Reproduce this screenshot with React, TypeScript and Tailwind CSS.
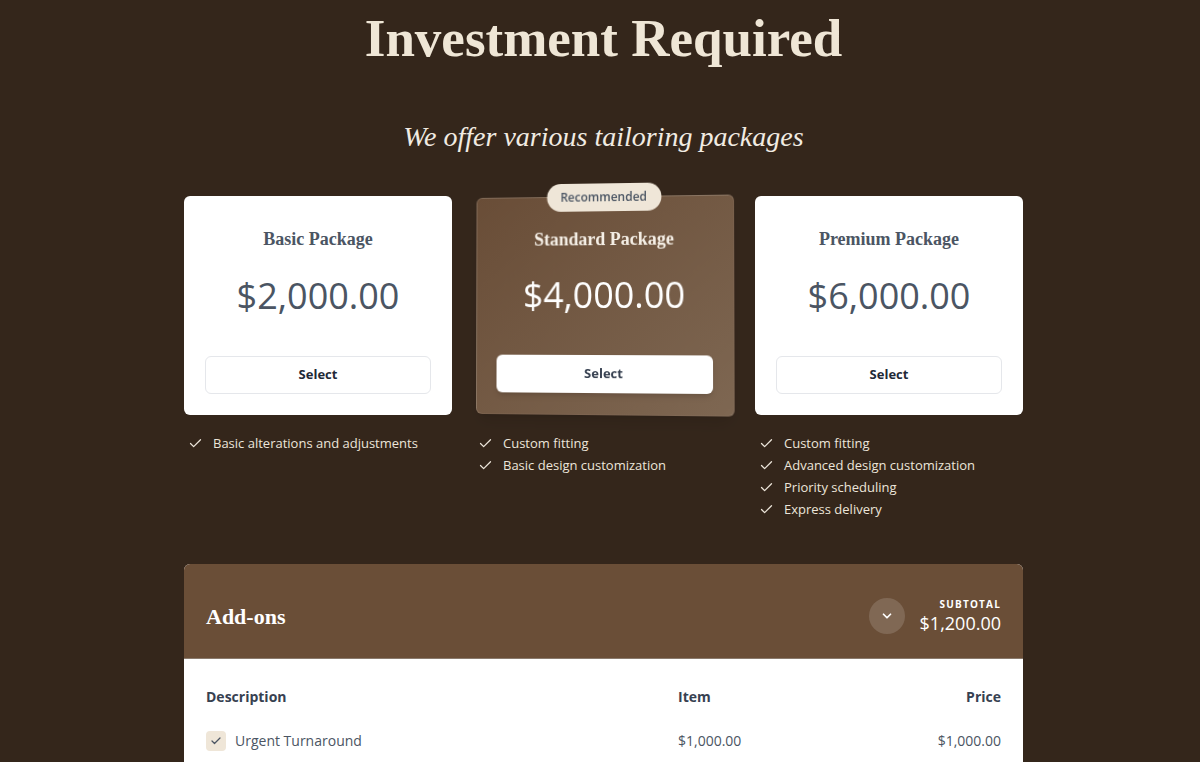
import { Check, ChevronDown } from "lucide-react";

const serif = "font-['Liberation_Serif',serif]";
const sans = "font-['Open_Sans',sans-serif]";

interface Pkg {
  name: string;
  price: string;
  features: string[];
  featured?: boolean;
}

const packages: Pkg[] = [
  { name: "Basic Package", price: "$2,000.00", features: ["Basic alterations and adjustments"] },
  {
    name: "Standard Package",
    price: "$4,000.00",
    features: ["Custom fitting", "Basic design customization"],
    featured: true,
  },
  {
    name: "Premium Package",
    price: "$6,000.00",
    features: ["Custom fitting", "Advanced design customization", "Priority scheduling", "Express delivery"],
  },
];

function PackageCard({ pkg }: { pkg: Pkg }) {
  if (pkg.featured) {
    return (
      <div className="relative rounded-md border border-white/10 bg-gradient-to-br from-[#694d37] to-[#7e6752] px-5 pb-[21px] pt-[28px] text-center shadow-lg [transform:perspective(800px)_rotateX(1deg)_rotateY(-5deg)]">
        <span className={`absolute -top-[14px] left-1/2 -translate-x-1/2 rounded-full bg-[#efe6d8] px-[14px] py-[5px] text-[12px] font-semibold leading-[18px] text-[#4b5563] ${sans}`}>
          Recommended
        </span>
        <h3 className={`text-[18px] font-bold leading-[28px] text-[#f5efe6] ${serif}`}>{pkg.name}</h3>
        <p className={`mt-[22px] text-[36px] leading-[40px] text-white ${sans}`}>{pkg.price}</p>
        <button className={`mt-[40px] h-[38px] w-full rounded-md bg-white text-[13px] font-bold text-[#374151] shadow-md ${sans}`}>
          Select
        </button>
      </div>
    );
  }
  return (
    <div className="rounded-md bg-white px-[21px] pb-[21px] pt-[29px] text-center">
      <h3 className={`text-[18px] font-bold leading-[28px] text-[#4b5563] ${serif}`}>{pkg.name}</h3>
      <p className={`mt-[23px] text-[36px] leading-[40px] text-[#4b5563] ${sans}`}>{pkg.price}</p>
      <button className={`mt-[40px] h-[38px] w-full rounded-md border border-gray-200 bg-white text-[13px] font-bold text-[#1f2937] ${sans}`}>
        Select
      </button>
    </div>
  );
}

export default function App() {
  return (
    <div className="min-h-screen bg-[#34261b] pb-10">
      <div className="ml-[184px] w-[839px] pt-[14px]">
        <h1 className={`text-center text-[53px] font-bold leading-[48px] text-[#efe6d6] ${serif}`}>
          Investment Required
        </h1>
        <p className={`mt-[57px] text-center text-[28px] italic leading-[36px] text-[#f1ebe2] ${serif}`}>
          We offer various tailoring packages
        </p>

        <div className="mt-[41px] grid grid-cols-[268px_259px_268px] gap-[22px]">
          {packages.map((pkg) => (
            <div key={pkg.name}>
              <PackageCard pkg={pkg} />
              <ul className={`mt-[17px] pl-1 ${sans}`}>
                {pkg.features.map((f) => (
                  <li key={f} className="flex items-center gap-[10px] text-[13px] leading-[22px] text-[#ece5da]">
                    <Check className="h-[15px] w-[15px] shrink-0" strokeWidth={2} />
                    {f}
                  </li>
                ))}
              </ul>
            </div>
          ))}
        </div>

        <div className="mt-[44px] overflow-hidden rounded-md bg-white">
          <div className="flex h-[95px] items-center justify-between border-b border-[#8a7a6c] bg-[#6a4e37] px-[22px] pt-[10px]">
            <h2 className={`text-[22px] font-bold text-white ${serif}`}>Add-ons</h2>
            <div className="flex items-center gap-[15px]">
              <button className="flex h-9 w-9 items-center justify-center rounded-full bg-white/15 text-white">
                <ChevronDown className="h-[14px] w-[14px]" strokeWidth={3} />
              </button>
              <div className={`text-right text-white ${sans}`}>
                <div className="text-[10px] font-bold uppercase leading-[14px] tracking-[0.12em]">Subtotal</div>
                <div className="text-[18px] leading-[24px]">$1,200.00</div>
              </div>
            </div>
          </div>
          <div className={`px-[22px] pt-[27px] pb-4 ${sans}`}>
            <div className="grid grid-cols-[472px_1fr_auto] text-[14px] font-bold leading-[22px] text-[#374151]">
              <span>Description</span>
              <span>Item</span>
              <span className="text-right">Price</span>
            </div>
            <div className="mt-[22px] grid grid-cols-[472px_1fr_auto] items-center text-[14px] leading-[22px] text-[#4b5563]">
              <span className="flex items-center gap-[9px]">
                <span className="flex h-5 w-5 items-center justify-center rounded bg-[#efe6d8] text-[#4b5563]">
                  <Check className="h-3 w-3" strokeWidth={2.5} />
                </span>
                Urgent Turnaround
              </span>
              <span>$1,000.00</span>
              <span className="text-right">$1,000.00</span>
            </div>
          </div>
        </div>
      </div>
    </div>
  );
}
